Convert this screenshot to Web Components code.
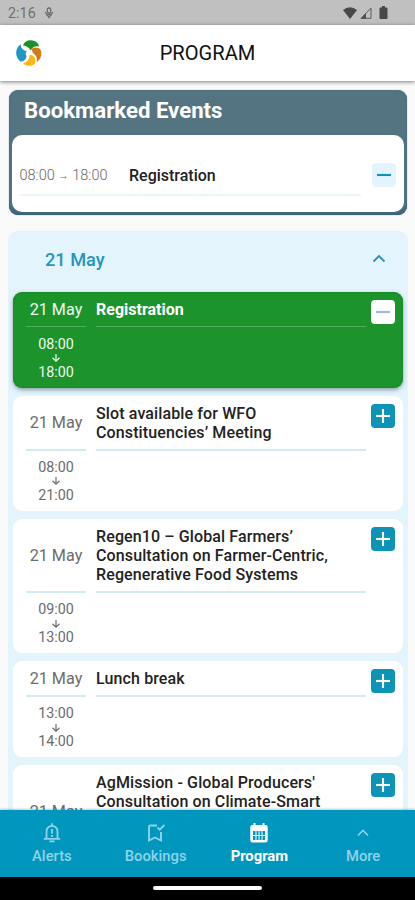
<!DOCTYPE html>
<html lang="en">
<head>
<meta charset="utf-8">
<title>Program</title>
<style>
html,body{margin:0;height:100%;overflow:hidden;background:#fafafa}
body{font-family:Roboto,"Liberation Sans",sans-serif}
</style>
</head>
<body>
<program-app></program-app>
<script>
const define = (name, html) => {
  const t = document.createElement('template');
  t.innerHTML = html;
  customElements.define(name, class extends HTMLElement {
    constructor() {
      super();
      this.attachShadow({mode: 'open'}).appendChild(t.content.cloneNode(true));
    }
  });
};

define('status-bar', `
<style>
:host{display:flex;align-items:center;height:25px;flex:none;box-sizing:border-box;padding:0 27px 0 8px;background:#c0c0c0;color:#707070;font-size:14.2px;letter-spacing:.1px}
.mic{margin-left:8px}.r{margin-left:auto;display:flex;align-items:center;gap:3px}
svg{display:block}
</style>
<span>2:16</span>
<svg class="mic" width="10" height="12" viewBox="0 0 10 12" fill="none" stroke="#6c6c6c" stroke-width="1.3"><rect x="3.300" y="1" width="3.400" height="5" rx="1.500"/><path d="M1.200 5 5 10.500 8.800 5M2 7.500h6"/></svg>
<div class="r">
<svg width="14" height="12" viewBox="0 0 14 12"><path d="M0 3Q7-2.6 14 3L7 12Z" fill="#484848"/></svg>
<svg width="12" height="12" viewBox="0 0 12 12"><path d="M1.200 11.300 11 1V11.300Z" fill="none" stroke="#5c5c5c"/><path d="M.5 11.800 6 6v5.800Z" fill="#505050"/></svg>
<svg style="margin-left:4px" width="9" height="13" viewBox="0 0 9 13"><path d="M3 0h3v1.500h1.700q.8 0 .8.8v9.900q0 .8-.8.8H1.300q-.8 0-.8-.8V2.300q0-.8.8-.8H3z" fill="#484848"/></svg>
</div>`);

define('app-header', `
<style>
:host{display:grid;grid-template-columns:60px 1fr 60px;align-items:center;height:56px;flex:none;background:#fff;box-shadow:0 1px 4px rgba(0,0,0,.5);z-index:1;position:relative}
svg{margin-left:15px;display:block}
h1{margin:0;text-align:center;font-size:20.100px;font-weight:400;color:#111}
</style>
<svg width="28" height="28" viewBox="0 0 28 28">
<path d="M8 6.500C9 3 12 1 16 1.200c4 .2 7.300 2.300 8.300 6.300-3.500-1-7 .3-8.500 3.700C14 8.500 11.500 7 8 6.500z" fill="#1d922b"/>
<path d="M16.200 10.800c1.500-2.800 7-3.300 9.500.2 1.500 4.500.3 9-4 12.300.8-4-.3-7.300-4-9.300 0-1.500-.5-2.500-1.500-3.200z" fill="#d07a18"/>
<path d="M14.500 16c4-.8 7.200 3 5.500 8.500-3 3.300-9 3-11.800-.3 4-.9 6.300-4 6.300-8.200z" fill="#fdb813"/>
<path d="M5.800 5c-.5 3.500 1.500 6 6 7.500-1.500 1.500-1.500 3.300-.3 4.500-.3 3.500-2.500 5.500-6 5.500C-.5 18-.2 9.500 5.800 5z" fill="#2098c4"/>
</svg>
<h1><slot></slot></h1>`);

define('toggle-button', `
<style>
:host{display:flex;align-items:center;justify-content:center;width:24px;height:24px;border-radius:4px;background:#0c93b6;color:#fff;flex:none}
:host([kind=remove]){background:#fff;color:#9cb4f4}
:host([kind=soft]){background:#e4f4fd;color:#1390b0}
:host([kind=remove]) .v,:host([kind=soft]) .v{display:none}
svg{display:block}
</style>
<svg width="16" height="16" viewBox="0 0 16 16" stroke="currentColor" stroke-width="2.100"><path d="M1 8h14"/><path class="v" d="M8 1v14"/></svg>`);

define('bookmark-card', `
<style>
:host{display:block;box-sizing:border-box;height:125px;margin:9px 8.500px 0 9px;padding:0 3px 3px;border-radius:9px;background:#547482;box-shadow:inset 0 -8px 8px -5px #355f73,0 0 1px #355f73}
h2{margin:0;height:44.500px;line-height:41px;padding-left:12px;font-size:22.200px;font-weight:700;color:#fff}
.row{display:flex;align-items:center;box-sizing:border-box;height:77.500px;background:#fff;border-radius:10px;padding:4px 8px 0 7.500px}
.in{width:341px;height:38px;margin-top:2px;border-bottom:2px solid #eef7f8;display:flex;align-items:center}
.time{width:109.500px;font-size:14.500px;color:#686868;font-weight:300}
.t{font-size:16px;font-weight:500;color:#222}
toggle-button{margin-left:auto}
</style>
<h2><slot name="heading"></slot></h2>
<div class="row"><div class="in"><span class="time"><slot name="time"></slot></span><span class="t"><slot></slot></span></div><toggle-button kind="soft"></toggle-button></div>`);

define('day-panel', `
<style>
:host{display:block;margin:16px 7px 0 8px;padding:0 5px;border-radius:9px;background:#e4f4fc}
header{display:flex;align-items:center;justify-content:space-between;height:60.500px;box-sizing:border-box;padding:0 17px 4px 32px;color:#2595bd;font-size:18.200px;font-weight:500}
svg{margin-top:-1px}
.list{display:grid;gap:8px}
</style>
<header><slot name="day"></slot><svg width="14" height="9" viewBox="0 0 14 9" fill="none" stroke="#2793b0" stroke-width="1.800"><path d="m1.500 7.500 5.500-5.500 5.500 5.500"/></svg></header>
<div class="list"><slot></slot></div>`);

define('event-card', `
<style>
:host{--line:#d2ebf3;--dim:#6c6c6c;display:grid;grid-template-columns:60px 270px 19px;column-gap:10px;box-sizing:border-box;padding:8px 8px 0 13px;background:#fff;border-radius:9px;color:#222}
:host([active]){--line:#4fae59;--dim:#eef8ee;background:#1c942b;color:#fff;box-shadow:0 2px 4px rgba(50,80,100,.5),inset 0 0 2px #087b18}
.date,.title{border-bottom:2px solid var(--line);padding-bottom:7px;display:flex;align-items:center}
:host([active]) .date,:host([active]) .title{border-bottom-width:1px;margin-bottom:1px}
.date{justify-content:center;font-size:16.200px;line-height:19px;color:var(--dim)}
.title{font-size:16px;font-weight:500;line-height:19.100px;letter-spacing:.12px;white-space:nowrap}
:host([active]) .title{font-weight:700;letter-spacing:0}
toggle-button,::slotted(toggle-button){margin-left:-5px}
.times{height:52px;padding-top:8px;display:flex;flex-direction:column;align-items:center;font-size:14.300px;line-height:17px;color:var(--dim)}
svg{display:block;margin:1.500px 0}
</style>
<div class="date"><slot name="date"></slot></div>
<div class="title"><span><slot></slot></span></div>
<slot name="action"></slot>
<div class="times"><slot name="from"></slot><svg width="10" height="8" viewBox="0 0 10 8" fill="none" stroke="currentColor" stroke-width="1.200"><path d="M5 0v7M1.500 3.800 5 7.200l3.500-3.400"/></svg><slot name="to"></slot></div>`);

define('nav-item', `
<style>
:host{display:flex;flex-direction:column;align-items:center;color:#8fd3e8;font-size:14.800px;font-weight:500;flex:1;padding-top:11px}
:host([active]){color:#fff;font-weight:700}
.i{height:24px;display:flex;align-items:center}
.l{line-height:23px}
</style>
<span class="i"><slot name="icon"></slot></span><span class="l"><slot></slot></span>`);

define('bottom-nav', `
<style>
:host{display:block;flex:none;position:relative;background:#000}
nav{display:flex;height:66.500px;background:#0096bd;box-shadow:0 -1px 2px rgba(0,80,110,.3)}
.home{width:109px;height:4px;border-radius:2px;background:#fff;margin:9.500px auto 10px}
</style>
<nav><slot></slot></nav><div class="home"></div>`);

define('program-app', `
<style>
:host{display:flex;flex-direction:column;height:900px;width:415px;overflow:hidden;background:#fafafa}
main{flex:1;min-height:0;overflow:hidden}
svg{display:block}
.arrow{font-size:10.500px;font-weight:500;vertical-align:1px}
</style>
<status-bar></status-bar>
<app-header>PROGRAM</app-header>
<main>
<bookmark-card><span slot="heading">Bookmarked Events</span><span slot="time">08:00 <span class="arrow">→</span> 18:00</span>Registration</bookmark-card>
<day-panel><span slot="day">21 May</span>
<event-card active><span slot="date">21 May</span>Registration<toggle-button slot="action" kind="remove"></toggle-button><span slot="from">08:00</span><span slot="to">18:00</span></event-card>
<event-card><span slot="date">21 May</span>Slot available for WFO<br>Constituencies’ Meeting<toggle-button slot="action"></toggle-button><span slot="from">08:00</span><span slot="to">21:00</span></event-card>
<event-card><span slot="date">21 May</span>Regen10 – Global Farmers’<br>Consultation on Farmer-Centric,<br>Regenerative Food Systems<toggle-button slot="action"></toggle-button><span slot="from">09:00</span><span slot="to">13:00</span></event-card>
<event-card><span slot="date">21 May</span>Lunch break<toggle-button slot="action"></toggle-button><span slot="from">13:00</span><span slot="to">14:00</span></event-card>
<event-card><span slot="date">21 May</span>AgMission - Global Producers'<br>Consultation on Climate-Smart<br>&nbsp;<br>&nbsp;<toggle-button slot="action"></toggle-button></event-card>
</day-panel>
</main>
<bottom-nav>
<nav-item><svg slot="icon" width="18" height="20" viewBox="0 0 18 20" fill="none" stroke="currentColor" stroke-width="1.800"><path d="M.8 15.800h16.400M3.500 15V8.500C3.500 5 6 3 9 3s5.500 2 5.500 5.500V15M9 3V.3M9 6v4.800M9 12v2M6.500 18.300h5"/></svg>Alerts</nav-item>
<nav-item><svg slot="icon" width="18" height="20" viewBox="0 0 18 20" fill="none" stroke="currentColor" stroke-width="1.900"><path d="M10 2.500H3.200q-1.200 0-1.200 1.200V17.500l6-3 6 3V9M10.500 4.500l2.200 2.200L17.500 2"/></svg>Bookings</nav-item>
<nav-item active><svg slot="icon" width="18" height="20" viewBox="0 0 18 20"><path d="M3.500 0h2v2h7V0h2v2h1q2.200 0 2.200 2.200v13q0 2.200-2.200 2.200h-13Q.3 19.400.3 17.200v-13Q.3 2 2.500 2h1z" fill="#fff"/><path d="M3 8h12v9H3z" fill="#0096bd"/><path d="M6 7.500v10M9 7.500v10M12 7.500v10M2.500 12.500h13" stroke="#fff" stroke-width="1"/></svg>Program</nav-item>
<nav-item><svg slot="icon" width="12" height="8" viewBox="0 0 12 8" fill="none" stroke="currentColor" stroke-width="1.700"><path d="m1 6.500 5-5 5 5"/></svg>More</nav-item>
</bottom-nav>`);
</script>
</body>
</html>
